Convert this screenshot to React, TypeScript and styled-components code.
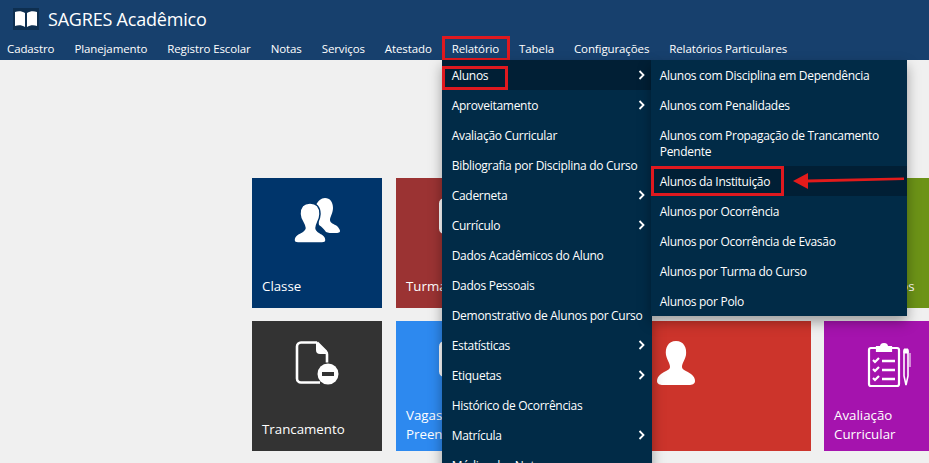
import styled, { createGlobalStyle } from 'styled-components';

const navItems = ['Cadastro', 'Planejamento', 'Registro Escolar', 'Notas', 'Serviços', 'Atestado', 'Relatório', 'Tabela', 'Configurações', 'Relatórios Particulares'];

const reportItems = [
	{ name: 'Alunos', sub: true },
	{ name: 'Aproveitamento', sub: true },
	{ name: 'Avaliação Curricular' },
	{ name: 'Bibliografia por Disciplina do Curso' },
	{ name: 'Caderneta', sub: true },
	{ name: 'Currículo', sub: true },
	{ name: 'Dados Acadêmicos do Aluno' },
	{ name: 'Dados Pessoais' },
	{ name: 'Demonstrativo de Alunos por Curso' },
	{ name: 'Estatísticas', sub: true },
	{ name: 'Etiquetas', sub: true },
	{ name: 'Histórico de Ocorrências' },
	{ name: 'Matrícula', sub: true },
	{ name: 'Médias das Notas' },
];

const studentItems = [
	'Alunos com Disciplina em Dependência',
	'Alunos com Penalidades',
	'Alunos com Propagação de Trancamento Pendente',
	'Alunos da Instituição',
	'Alunos por Ocorrência',
	'Alunos por Ocorrência de Evasão',
	'Alunos por Turma do Curso',
	'Alunos por Polo',
];

function UsersIcon() {
	return (
		<svg width="46" height="45" viewBox="0 0 46 45" fill="#fff">
			<path d="M22 7c2-4 5-7 9-7 5 0 8 4 8 10 0 5-3 9-3 12 0 3 4 4 7 6 2 2 3 4 3 5 0 2-3 2-6 2-3 0-6 0-8-1-2-3-4-5-7-7z" />
			<path d="M16 5c6 0 10 4 10 11 0 6-4 10-4 14 0 3 3 4 6 6 3 2 4 4 4 6 0 2-2 3-4 3H4c-2 0-4-1-4-3 0-2 1-4 4-6 3-2 7-3 7-6 0-4-5-8-5-14 0-7 4-11 10-11z" stroke="#00356b" strokeWidth="1.5" />
		</svg>
	);
}

function PersonIcon() {
	return (
		<svg width="38" height="44" viewBox="0 0 38 44" fill="#fff">
			<path d="M19 0c8 0 11 7 10 14-1 5-4 8-4 12 0 3 5 4 9 7 3 2 4 5 4 7 0 3-3 4-6 4H6c-3 0-6-1-6-4 0-2 1-5 4-7 4-3 9-4 9-7 0-4-3-7-4-12C8 7 11 0 19 0z" />
		</svg>
	);
}

function FileMinusIcon() {
	return (
		<svg width="44" height="44" viewBox="0 0 44 44" fill="none">
			<path d="M22 1.5H6a4 4 0 0 0-4 4v32a4 4 0 0 0 4 4h19M22 1.5l9 9a4 4 0 0 1 1 3v8" stroke="#fff" strokeWidth="2.6" />
			<path d="M21 1v8a4 4 0 0 0 4 4h7z" fill="#fff" />
			<circle cx="33" cy="33" r="10.5" fill="#fff" />
			<rect x="27" y="31" width="12" height="4" fill="#333" />
		</svg>
	);
}

function ChecklistIcon() {
	return (
		<svg width="46" height="48" viewBox="0 0 46 48" fill="none" stroke="#fff" strokeWidth="2.2">
			<path d="M11 7H5a2 2 0 0 0-2 2v34a2 2 0 0 0 2 2h26a2 2 0 0 0 2-2V9a2 2 0 0 0-2-2h-6" />
			<path d="M11 10V6h4a3 3 0 0 1 6 0h4v4z" fill="#fff" />
			<path d="M7 19l2 2 4-4M7 28l2 2 4-4M7 37l2 2 4-4" />
			<path d="M16 20h13M16 29h13M16 38h13" strokeWidth="2.6" />
			<path d="M38 10h4v25l-2 9-2-9z" strokeWidth="1.6" />
			<path d="M38 8h4v4h-4z" fill="#fff" strokeWidth="1" />
			<path d="M44 12v14" strokeWidth="1" />
		</svg>
	);
}

function SheetIcon() {
	return (
		<svg width="44" height="36" viewBox="0 0 44 36" fill="none">
			<rect x="1.5" y="1.5" width="41" height="33" rx="4" stroke="#fff" strokeWidth="3" />
		</svg>
	);
}

const tiles = [
	{ label: 'Classe', color: '#00356b', icon: <UsersIcon /> },
	{ label: 'Turmas', color: '#9b3333', icon: <SheetIcon /> },
	{ color: '#2b7a78', wide: true },
	{ label: 'Matriculados', color: '#6c9317' },
	{ label: 'Trancamento', color: '#333333', icon: <FileMinusIcon /> },
	{ label: 'Vagas Não Preenchidas', color: '#2d89ef', icon: <SheetIcon />, twoLines: true },
	{ color: '#cc342b', icon: <PersonIcon />, wide: true },
	{ label: 'Avaliação Curricular', color: '#a513ae', icon: <ChecklistIcon />, twoLines: true },
];

export default function App() {
	return (
		<>
			<GlobalStyle />
			<Header>
				<Brand>
					<BookBadge>
						<svg width="22" height="16" viewBox="0 0 22 16" fill="#fff">
							<path d="M0 1c3-1 7-1 10 1v14c-3-2-7-2-10-1z" />
							<path d="M22 1c-3-1-7-1-10 1v14c3-2 7-2 10-1z" />
						</svg>
					</BookBadge>
					<Title>SAGRES Acadêmico</Title>
				</Brand>
				<Nav>
					{navItems.map((item) => (
						<NavItem key={item}>
							{item}
							{item === 'Relatório' && (
								<>
									<RedBox $w={68} $h={25} $top={1} />
									<ReportMenu />
								</>
							)}
						</NavItem>
					))}
				</Nav>
			</Header>
			<Tiles>
				{tiles.map((tile) => (
					<Tile key={tile.color} $color={tile.color} $wide={tile.wide}>
						<TileIcon>{tile.icon}</TileIcon>
						<TileLabel $twoLines={tile.twoLines}>{tile.label}</TileLabel>
					</Tile>
				))}
			</Tiles>
		</>
	);
}

function ReportMenu() {
	return (
		<Menu>
			{reportItems.map((item) => (
				<MenuRow key={item.name} $active={item.name === 'Alunos'}>
					{item.name}
					{item.sub && (
						<Chevron width="7" height="10" viewBox="0 0 7 10">
							<path d="M1.5 1l4 4-4 4" fill="none" stroke="#fff" strokeWidth="1.8" />
						</Chevron>
					)}
					{item.name === 'Alunos' && (
						<>
							<RedBox $w={66} $h={24} $top={6} />
							<SubMenu>
								{studentItems.map((name) => (
									<SubRow key={name} $active={name === 'Alunos da Instituição'}>
										{name}
										{name === 'Alunos da Instituição' && (
											<>
												<RedBox $w={133} $h={30} $top={0} />
												<Arrow width="112" height="16" viewBox="0 0 112 16">
													<path d="M14 6.5L111 4.5v2.4L14 9.5z" fill="#e21b1b" />
													<path d="M0 8L15 0v16z" fill="#e21b1b" />
												</Arrow>
											</>
										)}
									</SubRow>
								))}
							</SubMenu>
						</>
					)}
				</MenuRow>
			))}
		</Menu>
	);
}

const GlobalStyle = createGlobalStyle`
	html, body {
		margin: 0;
		height: 463px;
		overflow: hidden;
		background: #f0f0f0;
		font-family: 'Open Sans', 'Noto Sans', sans-serif;
	}
`;

const Header = styled.header`
	height: 60px;
	background: #17406d;
	color: #fff;
	position: relative;
	z-index: 2;
`;

const Brand = styled.div`
	height: 35px;
	display: flex;
	align-items: center;
	padding: 3px 0 0 13px;
	box-sizing: border-box;
	gap: 9px;
`;

const BookBadge = styled.div`
	width: 26px;
	height: 22px;
	background: #0e2f50;
	display: flex;
	align-items: center;
	justify-content: center;
`;

const Title = styled.div`
	font-size: 18px;
	letter-spacing: -0.2px;
	line-height: 24px;
`;

const Nav = styled.nav`
	display: flex;
	height: 25px;
	margin-left: -3px;
`;

const NavItem = styled.div`
	position: relative;
	padding: 0 10px;
	font-size: 11.5px;
	letter-spacing: -0.11px;
	line-height: 28px;
	white-space: nowrap;
`;

const RedBox = styled.span<{ $w: number; $h: number; $top: number }>`
	position: absolute;
	left: 0;
	top: ${(p) => p.$top}px;
	width: ${(p) => p.$w}px;
	height: ${(p) => p.$h}px;
	box-sizing: border-box;
	border: 3px solid #e0191f;
	pointer-events: none;
`;

const Menu = styled.div`
	position: absolute;
	left: 0;
	top: 25px;
	width: 210px;
	background: #012b47;
	box-shadow: 0 6px 12px rgba(0, 0, 0, 0.35);
`;

const MenuRow = styled.div<{ $active?: boolean }>`
	position: relative;
	height: 30px;
	padding: 0 10px;
	font-size: 12px;
	letter-spacing: -0.29px;
	line-height: 32px;
	background: ${(p) => (p.$active ? '#011f35' : 'transparent')};
`;

const Chevron = styled.svg`
	position: absolute;
	right: 7px;
	top: 10px;
`;

const SubMenu = styled.div`
	position: absolute;
	left: 209px;
	top: 0;
	width: 256px;
	background: #012b47;
	box-shadow: 0 6px 12px rgba(0, 0, 0, 0.35);
`;

const SubRow = styled.div<{ $active?: boolean }>`
	position: relative;
	padding: 8px 10px 6px 9px;
	font-size: 12px;
	letter-spacing: -0.29px;
	line-height: 16px;
	white-space: normal;
	background: ${(p) => (p.$active ? '#011f35' : 'transparent')};
`;

const Arrow = styled.svg`
	position: absolute;
	left: 142px;
	top: 7px;
`;

const Tiles = styled.main`
	display: grid;
	grid-template-columns: 130px 130px 270px 130px;
	grid-auto-rows: 130px;
	column-gap: 14px;
	row-gap: 13px;
	padding: 118px 0 0 252px;
	width: 1000px;
`;

const Tile = styled.div<{ $color: string; $wide?: boolean }>`
	position: relative;
	width: ${(p) => (p.$wide ? '271px' : '130px')};
	background: ${(p) => p.$color};
	color: #fff;
	display: flex;
	flex-direction: column;
	align-items: stretch;
`;

const TileIcon = styled.div`
	height: 88px;
	padding-top: 20px;
	box-sizing: border-box;
	display: flex;
	justify-content: center;
`;

const TileLabel = styled.div<{ $twoLines?: boolean }>`
	margin-top: auto;
	padding: 0 10px ${(p) => (p.$twoLines ? '7px' : '12px')};
	font-size: 13.3px;
	line-height: 19px;
`;
